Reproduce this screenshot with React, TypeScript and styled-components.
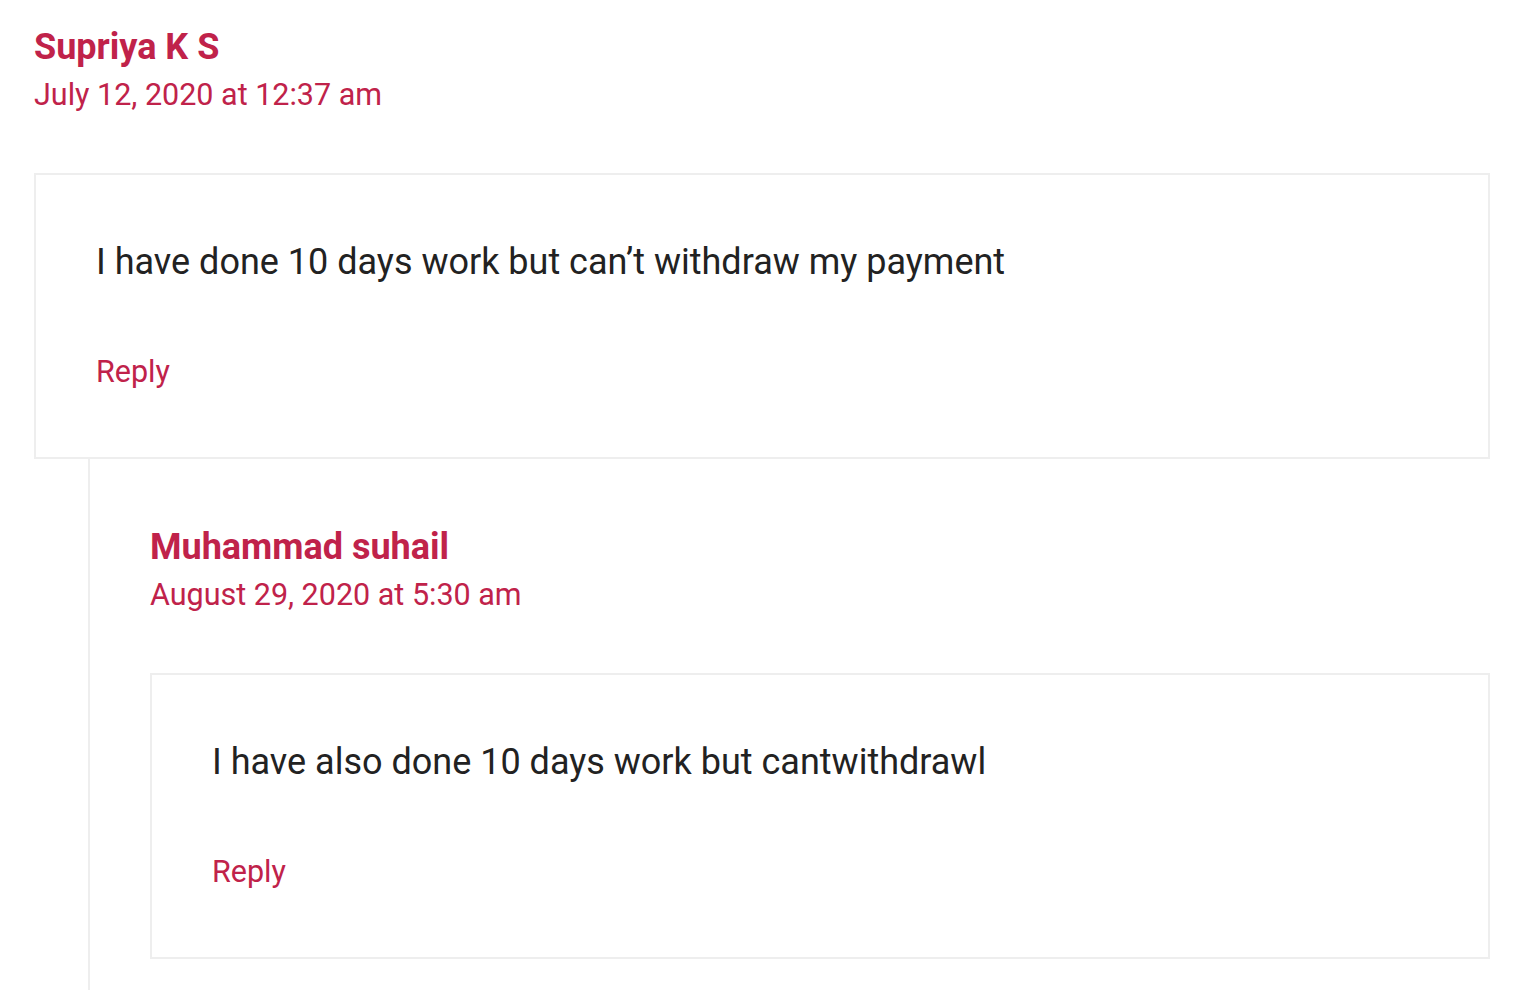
import styled, { createGlobalStyle } from 'styled-components'

type CommentData = {
  id: number
  author: string
  date: string
  text: string
  replies?: CommentData[]
}

const comments: CommentData[] = [
  {
    id: 1,
    author: 'Supriya K S',
    date: 'July 12, 2020 at 12:37 am',
    text: 'I have done 10 days work but can’t withdraw my payment',
    replies: [
      {
        id: 2,
        author: 'Muhammad suhail',
        date: 'August 29, 2020 at 5:30 am',
        text: 'I have also done 10 days work but cantwithdrawl',
      },
    ],
  },
]

const ACCENT = '#c0224a'

const GlobalStyle = createGlobalStyle`
  html, body {
    margin: 0;
    padding: 0;
    background: #ffffff;
  }
  body {
    font-family: Roboto, 'Liberation Sans', Arial, sans-serif;
    color: #222222;
    overflow: hidden;
  }
`

const Page = styled.div`
  padding: 0 30px 0 34px;
  height: 990px;
  box-sizing: border-box;
`

const CommentList = styled.ol`
  list-style: none;
  margin: 0;
  padding: 0;
`

const ChildList = styled.ol`
  list-style: none;
  margin: 0 0 0 54px;
  padding: 41px 0 60px 60px;
  border-left: 2px solid #eeeeee;
`

const CommentItem = styled.li`
  padding-top: 23px;
`

const Meta = styled.div`
  display: flex;
  flex-direction: column;
  align-items: flex-start;
  margin-bottom: 54px;
`

const AuthorName = styled.a`
  font-size: 36px;
  line-height: 48px;
  font-weight: 700;
  color: ${ACCENT};
  text-decoration: none;
`

const CommentDate = styled.a`
  font-size: 30.5px;
  line-height: 48px;
  color: ${ACCENT};
  text-decoration: none;
`

const Body = styled.div`
  border: 2px solid #eeeeee;
  padding: 60px 60px 63px;
`

const Text = styled.p`
  margin: 0 0 60px;
  font-size: 36px;
  line-height: 54px;
  color: #222222;
`

const ReplyLink = styled.a`
  display: inline-block;
  vertical-align: top;
  font-size: 30.5px;
  line-height: 45px;
  color: ${ACCENT};
  text-decoration: none;
`

const Comment = ({ comment }: { comment: CommentData }) => (
  <CommentItem>
    <Meta>
      <AuthorName href="#">{comment.author}</AuthorName>
      <CommentDate href="#">{comment.date}</CommentDate>
    </Meta>
    <Body>
      <Text>{comment.text}</Text>
      <ReplyLink href="#">Reply</ReplyLink>
    </Body>
    {comment.replies && (
      <ChildList>
        {comment.replies.map((r) => (
          <Comment key={r.id} comment={r} />
        ))}
      </ChildList>
    )}
  </CommentItem>
)

export default function App() {
  return (
    <>
      <GlobalStyle />
      <Page>
        <CommentList>
          {comments.map((c) => (
            <Comment key={c.id} comment={c} />
          ))}
        </CommentList>
      </Page>
    </>
  )
}
